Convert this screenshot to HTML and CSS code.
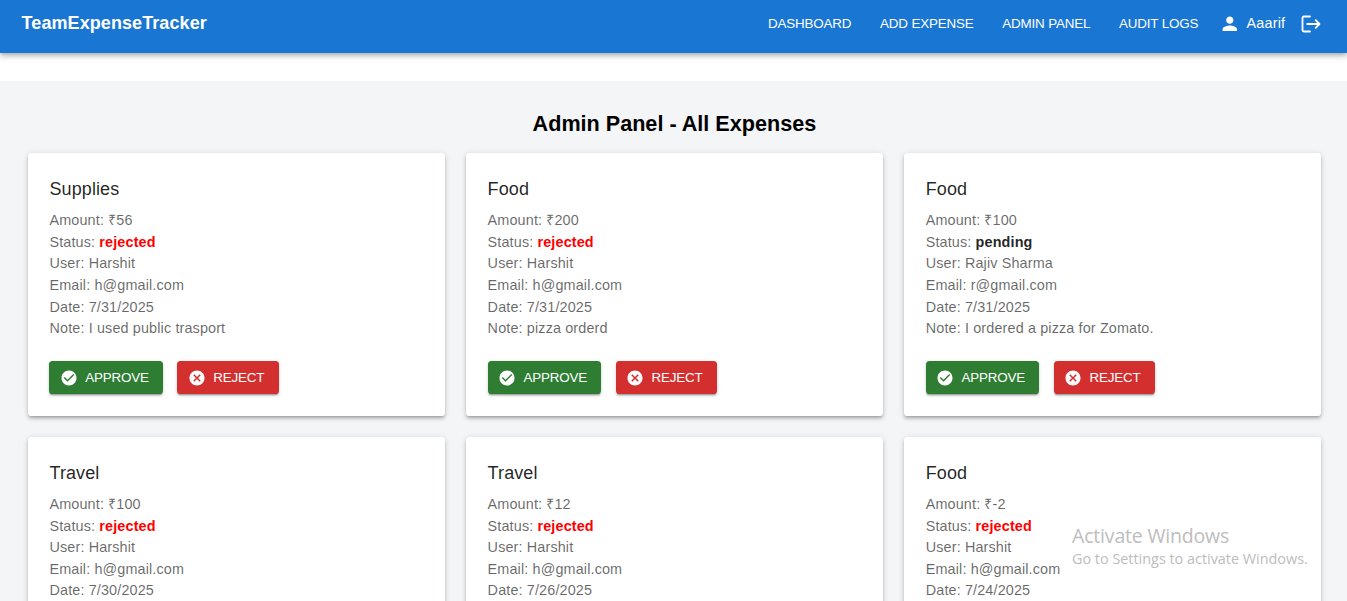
FILE: index.html
```
<!DOCTYPE html>
<html lang="en">
<head>
<meta charset="utf-8">
<title>TeamExpenseTracker</title>
<link rel="stylesheet" href="styles.css">
</head>
<body>
<header class="appbar">
  <div class="brand">TeamExpenseTracker</div>
  <nav class="nav">
    <a class="nav-link">DASHBOARD</a>
    <a class="nav-link">ADD EXPENSE</a>
    <a class="nav-link">ADMIN PANEL</a>
    <a class="nav-link">AUDIT LOGS</a>
    <div class="user">
      <svg class="person" viewBox="0 0 24 24"><path d="M12 12c2.21 0 4-1.79 4-4s-1.79-4-4-4-4 1.79-4 4 1.79 4 4 4m0 2c-2.67 0-8 1.34-8 4v2h16v-2c0-2.66-5.33-4-8-4"/></svg>
      <span class="user-name">Aaarif</span>
    </div>
    <svg class="logout" viewBox="0 0 20 18"><path d="M9 1.500H3Q1.500 1.500 1.500 3v12q0 1.500 1.500 1.500H9M6.200 9h12.300M14.700 5.200 18.500 9l-3.800 3.800"/></svg>
  </nav>
</header>
<main class="page">
  <h1 class="page-title">Admin Panel - All Expenses</h1>
  <div class="grid" id="grid"></div>
</main>
<aside class="watermark">
  <div class="watermark-title">Activate Windows</div>
  <div class="watermark-text">Go to Settings to activate Windows.</div>
</aside>
<template id="card">
  <article class="card">
    <h2 class="card-title"></h2>
    <p class="line">Amount: <span class="amount"></span></p>
    <p class="line">Status: <strong class="status"></strong></p>
    <p class="line">User: <span class="name"></span></p>
    <p class="line">Email: <span class="email"></span></p>
    <p class="line">Date: <span class="date"></span></p>
  </article>
</template>
<template id="card-footer">
  <p class="line">Note: <span class="note"></span></p>
  <div class="actions">
    <button class="btn approve"><svg class="btn-icon" viewBox="0 0 24 24"><path d="M12 2C6.480 2 2 6.480 2 12s4.480 10 10 10 10-4.480 10-10S17.520 2 12 2m-2 15-5-5 1.410-1.410L10 14.170l7.590-7.590L19 8z"/></svg>APPROVE</button>
    <button class="btn reject"><svg class="btn-icon" viewBox="0 0 24 24"><path d="M12 2C6.470 2 2 6.470 2 12s4.470 10 10 10 10-4.470 10-10S17.530 2 12 2m5 13.590L15.590 17 12 13.410 8.410 17 7 15.590 10.590 12 7 8.410 8.410 7 12 10.590 15.590 7 17 8.410 13.410 12z"/></svg>REJECT</button>
  </div>
</template>
<script src="app.js"></script>
</body>
</html>
```

FILE: styles.css
```
* { box-sizing: border-box; }
body {
  margin: 0;
  height: 601px;
  overflow: hidden;
  background: #fff;
  font-family: "Liberation Sans", Arial, sans-serif;
}
.appbar {
  display: flex;
  justify-content: space-between;
  align-items: center;
  height: 53px;
  padding: 0 26px 7px 21.6px;
  background: #1976d2;
  color: #fff;
  box-shadow: 0 1.8px 3.6px -1px rgba(0,0,0,.2), 0 3.6px 4.5px rgba(0,0,0,.14), 0 1px 9px rgba(0,0,0,.12);
}
.brand { font-size: 18px; font-weight: 700; letter-spacing: .08px; }
.nav { display: flex; align-items: center; }
.nav-link {
  margin-right: 28.7px;
  padding-top: 1px;
  font-size: 13.4px;
  line-height: 22px;
  letter-spacing: -.16px;
}
.user { display: flex; align-items: center; margin-left: -8px; }
.person { width: 21.6px; height: 21.6px; margin: 2px 6px 0 0; fill: #fff; }
.user-name { font-size: 14.4px; letter-spacing: .2px; }
.logout {
  width: 20px;
  height: 18px;
  margin: 2px 0 0 15.7px;
  fill: none;
  stroke: #fff;
  stroke-width: 1.8;
  stroke-linecap: round;
  stroke-linejoin: round;
}
.page {
  margin-top: 28px;
  height: 520px;
  overflow: hidden;
  padding: 28.8px 26px 0 27.8px;
  background: #f4f5f7;
}
.page-title {
  margin: 0 0 14.8px;
  font-size: 21.6px;
  line-height: 28.8px;
  text-align: center;
  color: #000;
}
.grid {
  display: grid;
  grid-template-columns: repeat(3, minmax(0, 1fr));
  gap: 21.4px 21.2px;
}
.card {
  padding: 21.7px;
  border-radius: 3.6px;
  background: #fff;
  box-shadow: 0 2.7px 2.7px -1.8px rgba(0,0,0,.2), 0 2.7px 3.6px rgba(0,0,0,.14), 0 1px 7.2px rgba(0,0,0,.12);
}
.card-title {
  margin: 0 0 6.4px;
  font-size: 18px;
  font-weight: 400;
  line-height: 28.8px;
  letter-spacing: .1px;
  color: rgba(0,0,0,.87);
}
.line {
  margin: 0;
  font-size: 14.4px;
  line-height: 21.6px;
  letter-spacing: .135px;
  color: rgba(0,0,0,.6);
}
.rejected { color: red; }
.pending { color: rgba(0,0,0,.87); }
.actions { display: flex; gap: 14.4px; margin-top: 21.4px; }
.btn {
  display: flex;
  align-items: center;
  height: 32.8px;
  padding: 0 14.2px;
  border: 0;
  border-radius: 3.6px;
  color: #fff;
  font-family: inherit;
  font-size: 13.4px;
  letter-spacing: -.16px;
  box-shadow: 0 2.7px 1px -1.8px rgba(0,0,0,.2), 0 1.8px 1.8px rgba(0,0,0,.14), 0 1px 4.5px rgba(0,0,0,.12);
}
.approve { background: #2e7d32; }
.reject { background: #d32f2f; }
.btn-icon { width: 18px; height: 18px; margin: 1px 7.2px 0 -3.6px; fill: #fff; }
.watermark {
  position: absolute;
  left: 1072px;
  top: 523px;
  font-family: "Open Sans", "Noto Sans", sans-serif;
  color: #bdbdbd;
  white-space: nowrap;
}
.watermark-title { font-size: 19.5px; line-height: 25px; letter-spacing: -.18px; }
.watermark-text { font-size: 14.4px; line-height: 22px; }
```

FILE: app.js
```
const expenses = [
  ["Supplies", "₹56", "rejected", "Harshit", "h@gmail.com", "7/31/2025", "I used public trasport"],
  ["Food", "₹200", "rejected", "Harshit", "h@gmail.com", "7/31/2025", "pizza orderd"],
  ["Food", "₹100", "pending", "Rajiv Sharma", "r@gmail.com", "7/31/2025", "I ordered a pizza for Zomato."],
  ["Travel", "₹100", "rejected", "Harshit", "h@gmail.com", "7/30/2025"],
  ["Travel", "₹12", "rejected", "Harshit", "h@gmail.com", "7/26/2025"],
  ["Food", "₹-2", "rejected", "Harshit", "h@gmail.com", "7/24/2025"]
];
const fields = [".card-title", ".amount", ".status", ".name", ".email", ".date"];
const template = document.getElementById("card");
const footer = document.getElementById("card-footer");
for (const expense of expenses) {
  const card = template.content.cloneNode(true);
  fields.forEach((selector, i) => { card.querySelector(selector).textContent = expense[i]; });
  card.querySelector(".status").classList.add(expense[2]);
  if (expense[6]) {
    const rest = footer.content.cloneNode(true);
    rest.querySelector(".note").textContent = expense[6];
    card.querySelector(".card").append(rest);
  }
  document.getElementById("grid").append(card);
}
```
